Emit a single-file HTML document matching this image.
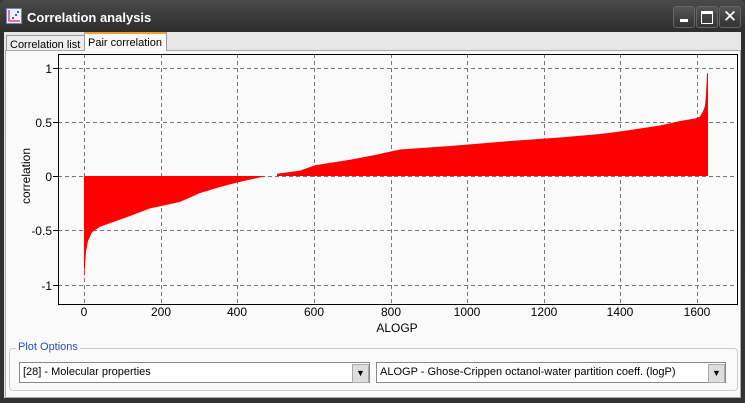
<!DOCTYPE html>
<html><head><style>
body{margin:0;width:745px;height:403px;overflow:hidden;font-family:"Liberation Sans",sans-serif;font-size:12px;background:#3a3a3a}
.win{position:absolute;left:0;top:0;width:745px;height:403px;background:linear-gradient(#4a4a4a,#2e2e2e 30px,#333 100%);border-radius:6px 6px 0 0}
.title{position:absolute;left:27px;top:10px;color:#fff;font-weight:bold;font-size:13px}
.btn{position:absolute;top:6px;width:20px;height:20px;border:1px solid #666;border-radius:3px;background:linear-gradient(#555,#333);color:#fff;text-align:center}
.client{position:absolute;left:4px;top:32px;width:737px;height:366px;background:#e6e6e6}
.tab{position:absolute;top:1px;height:17px;border:1px solid #999;border-bottom:none;background:#ececec;padding:0 3px;line-height:18px;font-size:11px;white-space:nowrap}
.panel{position:absolute;left:1px;top:18px;width:734px;height:346px;background:#fafafa;border:1px solid #aaa}
.group{position:absolute;left:9px;top:348px;width:727px;height:41px;border:1px solid #ccc;border-radius:4px}
.glabel{position:absolute;left:16px;top:341px;background:#fafafa;color:#2050c0;padding:0 2px;font-size:11px}
.combo{position:absolute;top:362px;border:1px solid #888;background:#fff;line-height:19px;padding-left:3px;font-size:11px;box-sizing:border-box;height:21px}
.dd{position:absolute;right:0;top:1px;width:15px;height:17px;border:1px solid #aaa;background:#ddd;font-size:9px;text-align:center;line-height:17px}
</style></head><body>
<div class="win">
<svg style="position:absolute;left:6px;top:8px" width="16" height="16"><rect x="0.5" y="0.5" width="15" height="15" fill="#eef" stroke="#6688cc"/><path d="M3 2V13H14" stroke="#d00" fill="none"/><rect x="6" y="9" width="2" height="2" fill="#36c"/><rect x="9" y="6" width="2" height="2" fill="#36c"/><rect x="11" y="3" width="2" height="2" fill="#36c"/></svg>
<div class="title">Correlation analysis</div>
<div class="btn" style="left:673px"><div style="position:absolute;left:6px;top:12px;width:8px;height:3px;background:#fff"></div></div>
<div class="btn" style="left:696px"><div style="position:absolute;left:4px;top:4px;width:10px;height:9px;border:1.5px solid #fff;border-top-width:3px"></div></div>
<div class="btn" style="left:719px;font-size:17px;line-height:20px">✕</div>
<div class="client">
<div class="tab" style="left:2px;top:3px;height:15px;width:72px">Correlation list</div>
<div class="tab" style="left:80px;background:#fafafa;border-top:2px solid #f0a030;height:17px;top:0;z-index:2;width:75px">Pair correlation</div>
<div class="panel"></div>
</div>
<svg style="position:absolute;left:0;top:0" width="745" height="403">
<g stroke="#777" stroke-dasharray="4,3" stroke-width="1">
<line x1="58" y1="68.5" x2="737" y2="68.5"/><line x1="58" y1="122.5" x2="737" y2="122.5"/><line x1="58" y1="176.5" x2="737" y2="176.5"/><line x1="58" y1="230.5" x2="737" y2="230.5"/><line x1="58" y1="285.5" x2="737" y2="285.5"/>
<line x1="84.5" y1="54" x2="84.5" y2="304"/><line x1="161.5" y1="54" x2="161.5" y2="304"/><line x1="237.5" y1="54" x2="237.5" y2="304"/><line x1="314.5" y1="54" x2="314.5" y2="304"/><line x1="391.5" y1="54" x2="391.5" y2="304"/><line x1="467.5" y1="54" x2="467.5" y2="304"/><line x1="544.5" y1="54" x2="544.5" y2="304"/><line x1="620.5" y1="54" x2="620.5" y2="304"/><line x1="697.5" y1="54" x2="697.5" y2="304"/>
</g>
<path fill="#f00" d="M84 176L84 278.6 86 251.6 88 240.8 92 232.2 100 226.8 115 221.4 130 216 150 208.4 160 206.2 180 201.9 200 193 220 187 237 182.5 255 178.5 266 176 277 176 277 173.8 290 172 300 170.6 315 165.2 350 159.8 375 155 400 149.5 450 146 510 141 560 137.5 600 134 620 131.5 640 128.5 660 125.5 680 121 695 118.5 700 116.6 703 111.2 705 105.8 706 95 707 73.4 708 73.4 708 176Z"/>
<rect x="58.5" y="54.5" width="679" height="250" fill="none" stroke="#000" stroke-width="1"/>
<g stroke="#000"><line x1="53" y1="68.5" x2="58" y2="68.5"/><line x1="53" y1="122.5" x2="58" y2="122.5"/><line x1="53" y1="176.5" x2="58" y2="176.5"/><line x1="53" y1="230.5" x2="58" y2="230.5"/><line x1="53" y1="285.5" x2="58" y2="285.5"/></g>
<g font-family="Liberation Sans" font-size="12" fill="#000" text-anchor="end">
<text x="52" y="73">1</text><text x="52" y="127">0.5</text><text x="52" y="181">0</text><text x="52" y="235">-0.5</text><text x="52" y="290">-1</text></g>
<g font-family="Liberation Sans" font-size="12" fill="#000" text-anchor="middle">
<text x="84" y="316">0</text><text x="161" y="316">200</text><text x="237" y="316">400</text><text x="314" y="316">600</text><text x="391" y="316">800</text><text x="467" y="316">1000</text><text x="544" y="316">1200</text><text x="620" y="316">1400</text><text x="697" y="316">1600</text>
<text x="397" y="332">ALOGP</text>
<text transform="translate(30 176) rotate(-90)">correlation</text></g>
</svg>
<div class="group"></div>
<div class="glabel">Plot Options</div>
<div class="combo" style="left:19px;width:351px">[28] - Molecular properties<div class="dd">▼</div></div>
<div class="combo" style="left:376px;width:350px">ALOGP - Ghose-Crippen octanol-water partition coeff. (logP)<div class="dd">▼</div></div>
</div>
</body></html>
